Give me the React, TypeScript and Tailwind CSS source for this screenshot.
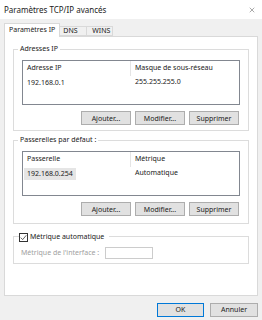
import React from 'react';
import { X } from 'lucide-react';

const Btn = ({ label, primary = false }: { label: string; primary?: boolean }) => (
  <div
    className={
      'w-[50px] h-[14px] flex items-center justify-center bg-[#e1e1e1] border text-[7px] leading-none text-[#1a1a1a] ' +
      (primary ? 'border-[#0078d7]' : 'border-[#adadad]')
    }
  >
    {label}
  </div>
);

const ListView = ({
  col1,
  col2,
  val1,
  val2,
  selected = false,
}: {
  col1: string;
  col2: string;
  val1: string;
  val2: string;
  selected?: boolean;
}) => (
  <div className="h-[45px] border border-[#828790] bg-white flex flex-col">
    <div className="flex h-[15px] items-center">
      <div className="w-[108px] h-full pl-[4px] flex items-center border-r border-[#e5e5e5]">{col1}</div>
      <div className="pl-[4px]">{col2}</div>
    </div>
    <div className="flex h-[13px] items-center">
      <div className="w-[108px] pl-[1px]">
        <span className={'inline-block px-[3px] leading-[12px] ' + (selected ? 'bg-[#e5e5e5]' : '')}>{val1}</span>
      </div>
      <div className="pl-[4px]">{val2}</div>
    </div>
  </div>
);

const ButtonRow = () => (
  <div className="flex justify-end gap-[4px] pr-[1px]">
    <Btn label="Ajouter..." />
    <Btn label="Modifier..." />
    <Btn label="Supprimer" />
  </div>
);

export default function App() {
  return (
    <div className="w-[262px] h-[320px] bg-[#f0f0f0] flex flex-col font-['Noto_Sans','Liberation_Sans',sans-serif] text-[7px] text-[#1a1a1a]">
      {/* title bar */}
      <div className="h-[19px] bg-white flex items-center justify-between pl-[4px] pr-[6px]">
        <span className="text-[8px] text-[#1a1a1a]">Paramètres TCP/IP avancés</span>
        <X className="w-[8px] h-[8px] text-[#555]" strokeWidth={1.5} />
      </div>

      <div className="flex-1 flex flex-col px-[4px] pt-[4px]">
        {/* tabs */}
        <div className="flex items-end h-[13px] relative z-10">
          <div className="h-[14px] px-[4px] bg-white border border-b-0 border-[#d9d9d9] flex items-center -mb-[1px]">
            Paramètres IP
          </div>
          <div className="h-[10px] w-[27px] bg-[#f0f0f0] border border-l-0 border-[#d9d9d9] flex items-center pl-[3px]">
            DNS
          </div>
          <div className="h-[10px] w-[26px] bg-[#f0f0f0] border border-l-0 border-[#d9d9d9] flex items-center pl-[5px]">
            WINS
          </div>
        </div>

        {/* panel */}
        <div className="h-[260px] bg-white border border-[#d9d9d9] px-[8px] flex flex-col">
          {/* Adresses IP */}
          <div className="relative mt-[12px] border border-[#dcdcdc] pt-[10px] px-[8px] pb-[5px] flex flex-col gap-[6px]">
            <span className="absolute -top-[6px] left-[4px] bg-white px-[2px] leading-[10px]">Adresses IP</span>
            <ListView col1="Adresse IP" col2="Masque de sous-réseau" val1="192.168.0.1" val2="255.255.255.0" />
            <ButtonRow />
          </div>

          {/* Passerelles */}
          <div className="relative mt-[9px] border border-[#dcdcdc] pt-[10px] px-[8px] pb-[7px] flex flex-col gap-[6px]">
            <span className="absolute -top-[6px] left-[4px] bg-white px-[2px] leading-[10px]">Passerelles par défaut :</span>
            <ListView col1="Passerelle" col2="Métrique" val1="192.168.0.254" val2="Automatique" selected />
            <ButtonRow />
          </div>

          {/* Métrique */}
          <div className="relative mt-[12px] border border-[#dcdcdc] pt-[10px] px-[7px] pb-[4px] flex items-center gap-[6px]">
            <div className="absolute -top-[5px] left-[5px] bg-white pr-[5px] flex items-center gap-[2px]">
              <div className="w-[9px] h-[9px] border border-[#333] bg-white flex items-center justify-center">
                <svg viewBox="0 0 10 10" className="w-[7px] h-[7px]">
                  <path d="M1 5.2 L3.8 8 L9 1.8" fill="none" stroke="#222" strokeWidth="1" />
                </svg>
              </div>
              <span className="leading-[10px]">Métrique automatique</span>
            </div>
            <span className="text-[#a0a0a0]">Métrique de l'interface :</span>
            <div className="w-[48px] h-[12px] border border-[#cccccc] bg-white" />
          </div>
        </div>

        {/* footer */}
        <div className="flex justify-end gap-[6px] mt-[7px]">
          <div className="w-[47px] h-[14px] flex items-center justify-center bg-[#e1e1e1] border border-[#0078d7]">OK</div>
          <div className="w-[48px] h-[14px] flex items-center justify-center bg-[#e1e1e1] border border-[#adadad]">Annuler</div>
        </div>
      </div>
    </div>
  );
}
